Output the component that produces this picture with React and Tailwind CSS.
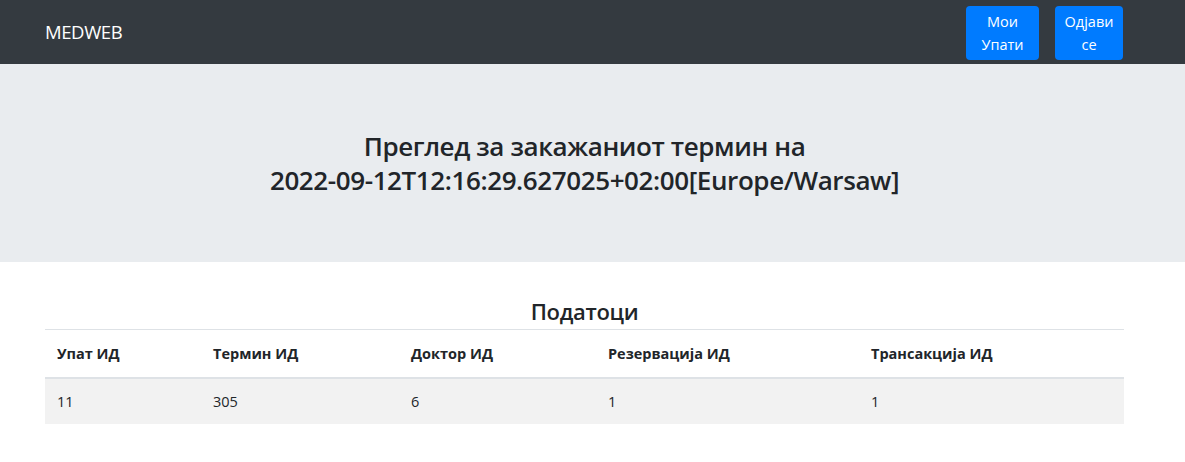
import React from 'react';

const cols = [
  { label: 'Упат ИД', value: '11', w: 'w-[156px]' },
  { label: 'Термин ИД', value: '305', w: 'w-[198px]' },
  { label: 'Доктор ИД', value: '6', w: 'w-[197px]' },
  { label: 'Резервација ИД', value: '1', w: 'w-[263px]' },
  { label: 'Трансакција ИД', value: '1', w: 'w-[265px]' },
];

function App() {
  return (
    <div className="min-h-[462px] bg-white text-[#212529] font-['Open_Sans',sans-serif]">
      {/* Navbar */}
      <nav className="h-16 bg-[#343a40]">
        <div className="flex h-full items-center justify-between pl-[45px] pr-[62px]">
          <span className="text-[18.5px] text-white tracking-[-0.4px]">MEDWEB</span>
          <div className="flex gap-4 self-start pt-[6px]">
            <button className="w-[73px] rounded bg-[#007bff] py-[4px] text-[14.5px] leading-[23px] text-white">
              Мои<br />Упати
            </button>
            <button className="w-[68px] rounded bg-[#007bff] py-[4px] text-[14.5px] leading-[23px] text-white">
              Одјави<br />се
            </button>
          </div>
        </div>
      </nav>

      {/* Jumbotron */}
      <div className="h-[198px] bg-[#e9ecef] flex items-center pl-[45px] pr-[61px]">
        <h3 className="w-full text-center text-[26px] leading-[34px] font-semibold tracking-[-0.4px] text-[#212529]">
          Преглед за закажаниот термин на
          <br />
          2022-09-12T12:16:29.627025+02:00[Europe/Warsaw]
        </h3>
      </div>

      {/* Data */}
      <div className="pl-[45px] pr-[61px] pt-[31px]">
        <h4 className="text-center text-[22px] leading-[36px] font-semibold tracking-[-0.3px]">Податоци</h4>
        <table className="w-[1079px] border-collapse text-[14.5px]">
          <thead>
            <tr className="border-t border-[#dee2e6] border-b-2">
              {cols.map((c) => (
                <th key={c.label} className={`${c.w} px-3 py-3 text-left font-bold leading-[23px]`}>
                  {c.label}
                </th>
              ))}
            </tr>
          </thead>
          <tbody>
            <tr className="bg-[#f2f2f2]">
              {cols.map((c) => (
                <td key={c.label} className="px-3 py-[11px] leading-[23px]">
                  {c.value}
                </td>
              ))}
            </tr>
          </tbody>
        </table>
      </div>
    </div>
  );
}

export default App;
